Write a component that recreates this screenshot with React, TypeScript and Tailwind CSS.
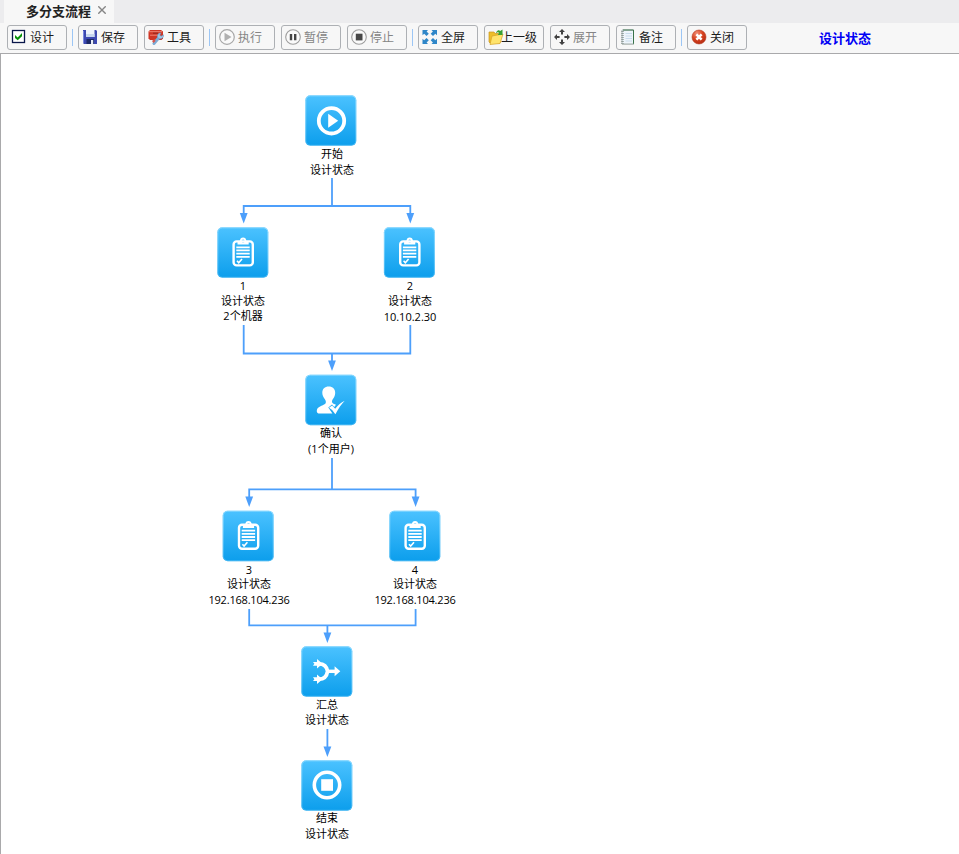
import type { ReactNode } from "react";

type Glyph = "play" | "task" | "user" | "merge" | "stop";

interface FlowNode {
  x: number;
  y: number;
  glyph: Glyph;
  // text, vertical centre of the line, horizontal centre of the line
  lines: [string, number, number][];
}

const nodes: FlowNode[] = [
  { x: 305, y: 95, glyph: "play", lines: [["开始", 154, 332], ["设计状态", 170, 332]] },
  { x: 217, y: 227, glyph: "task", lines: [["1", 286, 243], ["设计状态", 301, 243], ["2个机器", 316, 243]] },
  { x: 383.6, y: 227, glyph: "task", lines: [["2", 286, 410], ["设计状态", 301, 410], ["10.10.2.30", 317, 410]] },
  { x: 305, y: 374.4, glyph: "user", lines: [["确认", 433, 331], ["(1个用户)", 449, 331]] },
  { x: 222.4, y: 510.4, glyph: "task", lines: [["3", 570, 249], ["设计状态", 584, 249], ["192.168.104.236", 600, 249]] },
  { x: 389, y: 510.4, glyph: "task", lines: [["4", 570, 415], ["设计状态", 584, 415], ["192.168.104.236", 600, 415]] },
  { x: 301, y: 646, glyph: "merge", lines: [["汇总", 705, 327], ["设计状态", 720, 327]] },
  { x: 301, y: 760, glyph: "stop", lines: [["结束", 818, 327], ["设计状态", 834, 327]] },
];

const edges = [
  "M332 178V206",
  "M243.7 214V206H410.3V214",
  "M243.7 325V353.5H410.3V325",
  "M332 353.5V362",
  "M332 458V489.3",
  "M249.2 498V489.3H415.6V498",
  "M249.2 609V625.3H415.6V609",
  "M327.4 625.3V634",
  "M327.4 729V747",
];

const arrowTips: [number, number][] = [
  [243.7, 223.5],
  [410.3, 223.5],
  [332, 371],
  [249.2, 507],
  [415.6, 507],
  [327.4, 643],
  [327.4, 757],
];

function GlyphShape({ kind }: { kind: Glyph }) {
  switch (kind) {
    case "play":
      return (
        <>
          <circle cx="26.5" cy="25.8" r="12.7" fill="none" stroke="#fff" strokeWidth="3.8" />
          <path d="M23.2 18.8L33.2 25.8L23.2 32.8Z" fill="#fff" />
        </>
      );
    case "stop":
      return (
        <>
          <circle cx="26" cy="25" r="12.7" fill="none" stroke="#fff" strokeWidth="3.6" />
          <rect x="20.2" y="19.2" width="11.8" height="11.6" fill="#fff" />
        </>
      );
    case "task":
      return (
        <>
          <rect x="16.6" y="14.4" width="19.2" height="24" rx="3" fill="none" stroke="#fff" strokeWidth="2.4" />
          <path
            fillRule="evenodd"
            d="M20.5 17.5V15.3Q20.5 14 22 14H22.8Q23.2 10.6 26.1 10.6T29.4 14H30.2Q31.7 14 31.7 15.3V17.5ZM26.1 12.5A1.5 1.5 0 1 0 26.1 15.5A1.5 1.5 0 1 0 26.1 12.5Z"
            fill="#fff"
          />
          <path d="M19.3 20.3H32.7M19.3 23.4H32.7M19.3 26.6H32.7M19.3 29.8H32.7" stroke="#fff" strokeWidth="1.8" />
          <path d="M20 33.8L21.7 35.7L25 31.9" fill="none" stroke="#fff" strokeWidth="1.6" />
        </>
      );
    case "user":
      return (
        <>
          <path
            d="M23.7 12C27.8 12 30.2 14.4 30.2 18.5C30.2 21.5 28.6 23.6 27.3 25.5C26.6 27 27 28.6 28.5 29.3L31 30.3L29.2 32.5L27 30.2L23.3 33.2L27.4 39.2H14.5C12 39.2 11.2 37 12.2 34.6C13.5 31.7 19.5 30.8 20.6 28.8C21.3 27.2 20.6 26 19.7 24.5C18.3 22.5 17.3 21 17.3 18.3C17.3 14.4 19.8 12 23.7 12Z"
            fill="#fff"
          />
          <path d="M24 33.4L27.1 31L30.2 34.3C33 30.6 36 28 39.7 26.3C36.5 29.7 33.4 34 30.4 39.8Q28.2 35.5 24 33.4Z" fill="#fff" />
        </>
      );
    case "merge":
      return (
        <>
          <path d="M18 17.8C23.5 17.8 25.8 20.5 26.6 25.3C25.8 30.3 23.5 33.2 18 33.2" fill="none" stroke="#fff" strokeWidth="3.8" />
          <path d="M25.5 25.3H35" stroke="#fff" strokeWidth="3.4" />
          <path d="M16 13L21.5 17.8L16 22.6ZM16 28.4L21.5 33.2L16 38ZM33.6 20.3L39.3 25.3L33.6 30.3Z" fill="#fff" />
          <path d="M12 15.9H17V19.7H12L13.4 17.8ZM12 31.3H17V35.1H12L13.4 33.2Z" fill="#fff" />
        </>
      );
  }
}

function Node({ node }: { node: FlowNode }) {
  return (
    <>
      <svg className="absolute" style={{ left: Math.floor(node.x), top: Math.floor(node.y) }} width="53" height="53" viewBox="0 0 53 53">
        <g transform={`translate(${node.x % 1} ${node.y % 1})`}>
          <rect x="0.3" y="0.3" width="51" height="50.5" rx="5" fill="url(#tile)" />
          <rect x="0.8" y="0.8" width="50" height="49.5" rx="4.5" fill="none" stroke="url(#rim)" />
          <GlyphShape kind={node.glyph} />
        </g>
      </svg>
      {node.lines.map(([text, y, x]) => (
        <span
          key={y}
          className={`absolute -translate-x-1/2 -translate-y-1/2 text-[11px] leading-4 whitespace-nowrap text-black ${text.startsWith("192") ? "tracking-[-0.2px]" : ""}`}
          style={{ left: x, top: y }}
        >
          {text}
        </span>
      ))}
    </>
  );
}

function ToolButton({ icon, label, disabled, tight }: { icon: ReactNode; label: string; disabled?: boolean; tight?: boolean }) {
  return (
    <div className="flex h-[25px] w-[60px] shrink-0 items-center rounded-[3px] border border-[#adb0b4] bg-[#f7f7f7] pl-[3px]">
      <svg width="16" height="16" viewBox="0 0 16 16" className="mb-px shrink-0">
        {icon}
      </svg>
      <span className={`text-[12px] leading-4 whitespace-nowrap ${tight ? "-ml-[3px]" : "ml-[3px]"} ${disabled ? "text-[#858585]" : "text-[#1c1c1c]"}`}>
        {label}
      </span>
    </div>
  );
}

const Separator = () => <div className="-mx-px h-[17px] w-px shrink-0 bg-[#9cc6f5]" />;

const CheckIcon = (
  <>
    <rect x="1.5" y="1.5" width="12" height="12" fill="#fff" stroke="#09164a" strokeWidth="1.3" />
    <path d="M4 6L6.7 8.5L11 4V7.2L6.7 11.3L4 9Z" fill="#079207" />
  </>
);
const SaveIcon = (
  <>
    <path d="M1 1H14L15 2V15H2L1 14Z" fill="#3c48b0" />
    <path d="M4 1H12.5V8H4Z" fill="#edf2fb" />
    <path d="M4 5H12.5V8H4Z" fill="#c7d6ee" />
    <path d="M4.5 10H12V15H4.5Z" fill="#1c2866" />
    <path d="M9 11H11.2V15H9Z" fill="#e8edf8" />
    <path d="M1.5 2V14" stroke="#7887df" />
  </>
);
const ToolsIcon = (
  <>
    <path d="M0.5 2.5L2 1H13L15 2.5V9.5L13.5 11H2L0.5 9.5Z" fill="#cf3524" />
    <path d="M1 2.7H14M2 6.2H11" stroke="#ee8474" />
    <path d="M5 4.2H10" stroke="#8f261b" />
    <path d="M6 14.5L11 8.5" stroke="#7cabd5" strokeWidth="3" strokeLinecap="round" />
    <path d="M9.5 8.5C8.9 6 10.4 3.8 13 4L11.8 6L13 7.3L15.5 5.8C16 8.5 13.8 10.2 11.6 9.8Z" fill="#9fc5e4" stroke="#608cb9" strokeWidth=".5" />
    <path d="M4 12L6.5 10L7.5 12L5.5 14Z" fill="#d9534a" />
  </>
);
const RunIcon = (
  <>
    <circle cx="8" cy="8" r="7.3" fill="#fafafa" stroke="#a8a8a8" strokeWidth="1.2" />
    <path d="M5.5 3.8L12.5 8L5.5 12.2Z" fill="#b1b1b1" />
  </>
);
const PauseIcon = (
  <>
    <circle cx="8" cy="8" r="7.3" fill="#fafafa" stroke="#9d9d9d" strokeWidth="1.1" />
    <path d="M4.8 5H7.2V11.3H4.8ZM9 5H11.4V11.3H9Z" fill="#444" />
  </>
);
const StopIcon = (
  <>
    <circle cx="8" cy="8" r="7.3" fill="#fafafa" stroke="#9d9d9d" strokeWidth="1.1" />
    <rect x="4.8" y="4.7" width="6.7" height="6.7" fill="#484848" />
  </>
);
const FullscreenIcon = (
  <g fill="#2e86c8">
    <path id="corner" d="M0.5 1H6L4.6 2.5L6.8 4.7L4.5 7L2.2 4.7L0.5 6.3Z" />
    <use href="#corner" transform="matrix(-1 0 0 1 15.5 0)" />
    <use href="#corner" transform="matrix(1 0 0 -1 0 16)" />
    <use href="#corner" transform="matrix(-1 0 0 -1 15.5 16)" />
  </g>
);
const UpIcon = (
  <>
    <path d="M1 3H6L7.2 4.5H12V14H2L1 13Z" fill="#edbe28" stroke="#c79720" strokeWidth=".7" />
    <path d="M4 7L15 5L12 14.5L2 15.5Z" fill="#ffe46c" stroke="#d7a425" strokeWidth=".7" />
    <path d="M8 3.3C9.8 0.8 11.2 0.8 12.2 2L14.5 0.5V6H9.8L11.2 4C10.5 3 9.5 2.8 8 4Z" fill="#37a135" />
  </>
);
const ExpandIcon = (
  <g fill="#414141">
    <path id="arm" d="M8 0L11 3H9V5.6H7V3H5Z" />
    <use href="#arm" transform="rotate(90 8 8)" />
    <use href="#arm" transform="rotate(180 8 8)" />
    <use href="#arm" transform="rotate(270 8 8)" />
  </g>
);
const NoteIcon = (
  <>
    <path d="M2 1H13.5V15H2Z" fill="#eef5fb" stroke="#aab4b7" />
    <path d="M3 1H13.5V15" fill="none" stroke="#38734a" />
    <path d="M5.5 4.5H12M5.5 7H12M5.5 9.5H12M5.5 12H12" stroke="#c9dcec" />
    <path d="M2.5 2V15" stroke="#929f9c" strokeWidth="2.5" strokeDasharray="1 1" />
    <path d="M2 15.3H14" stroke="#b8c0bc" />
  </>
);
const CloseIcon = (
  <>
    <circle cx="8" cy="8" r="7" fill="url(#red)" stroke="#b53a20" strokeWidth=".6" />
    <path d="M5.4 5.3L10.6 10.7M10.6 5.3L5.4 10.7" stroke="#fff" strokeWidth="2.5" />
  </>
);

export default function App() {
  return (
    <div className="relative flex h-[854px] w-[959px] flex-col overflow-hidden bg-white font-['Open_Sans','Noto_Sans_CJK_SC',sans-serif]">
      <svg width="0" height="0" className="absolute">
        <defs>
          <linearGradient id="tile" x1="0" y1="0" x2="0" y2="1">
            <stop offset="0" stopColor="#4bc2ff" />
            <stop offset="1" stopColor="#0c9eec" />
          </linearGradient>
          <linearGradient id="rim" x1="0" y1="0" x2="0" y2="1">
            <stop offset="0" stopColor="#a5e2ff" stopOpacity=".7" />
            <stop offset="1" stopColor="#a5e2ff" stopOpacity=".35" />
          </linearGradient>
          <radialGradient id="red" cx=".35" cy=".25" r=".8">
            <stop offset="0" stopColor="#f0917a" />
            <stop offset=".5" stopColor="#d94522" />
            <stop offset="1" stopColor="#b52b12" />
          </radialGradient>
        </defs>
      </svg>

      <div className="flex h-[23px] shrink-0 bg-[#ececee] pl-1">
        <div className="flex w-[110px] items-center bg-[#f7f7f7] pb-[2px] pl-[22px]">
          <span className="text-[13px] leading-4 font-bold whitespace-nowrap text-[#222]">多分支流程</span>
          <svg width="8" height="8" viewBox="0 0 8 8" className="mb-px ml-[7px]">
            <path d="M0.3 0.3L7.7 7.7M7.7 0.3L0.3 7.7" stroke="#858585" strokeWidth="1.4" />
          </svg>
        </div>
      </div>

      <div className="flex h-[30px] shrink-0 items-center gap-1.5 bg-[#f7f7f7] pb-px pl-[7px]">
        <ToolButton icon={CheckIcon} label="设计" />
        <Separator />
        <ToolButton icon={SaveIcon} label="保存" />
        <ToolButton icon={ToolsIcon} label="工具" />
        <Separator />
        <ToolButton icon={RunIcon} label="执行" disabled />
        <ToolButton icon={PauseIcon} label="暂停" disabled />
        <ToolButton icon={StopIcon} label="停止" disabled />
        <Separator />
        <ToolButton icon={FullscreenIcon} label="全屏" />
        <ToolButton icon={UpIcon} label="上一级" tight />
        <ToolButton icon={ExpandIcon} label="展开" disabled />
        <ToolButton icon={NoteIcon} label="备注" />
        <Separator />
        <ToolButton icon={CloseIcon} label="关闭" />
        <span className="ml-[66px] text-[13px] leading-4 font-bold whitespace-nowrap text-[#0000f5]">设计状态</span>
      </div>

      <div className="flex-1 border-t border-l border-[#a9a9ab] bg-white">
        <svg width="959" height="854" className="absolute top-0 left-0">
          <g fill="none" stroke="#4d9ffb" strokeWidth="1.8">
            {edges.map((d) => (
              <path key={d} d={d} />
            ))}
          </g>
          {arrowTips.map(([x, y]) => (
            <path key={`${x}-${y}`} d={`M${x - 3.9} ${y - 10.5}H${x + 3.9}L${x} ${y}Z`} fill="#4d9ffb" />
          ))}
        </svg>
        {nodes.map((n) => (
          <Node key={`${n.x}-${n.y}`} node={n} />
        ))}
      </div>
    </div>
  );
}
